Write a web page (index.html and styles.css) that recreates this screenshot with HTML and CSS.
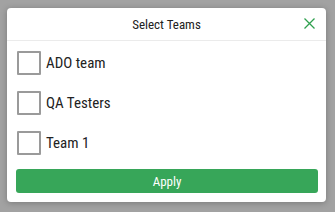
FILE: index.html
```html
<!DOCTYPE html>
<html>
<head>
<meta charset="utf-8">
<link rel="stylesheet" href="styles.css">
</head>
<body>
<div class="dialog">
  <div class="header">
    <span class="title">Select Teams</span>
    <span class="close"><svg width="11" height="11" viewBox="0 0 11 11"><path d="M0.5 0.5L10.5 10.5M10.5 0.5L0.5 10.5" stroke="#2fa04f" stroke-width="1.3" fill="none"/></svg></span>
  </div>
  <div class="list">
    <label class="row"><span class="box"></span><span class="label">ADO team</span></label>
    <label class="row"><span class="box"></span><span class="label">QA Testers</span></label>
    <label class="row"><span class="box"></span><span class="label">Team 1</span></label>
  </div>
  <div class="footer"><button class="apply">Apply</button></div>
</div>
</body>
</html>
```
FILE: styles.css
```css
html, body { margin: 0; padding: 0; }
body {
  width: 335px; height: 212px;
  background: #a2a2a2;
  font-family: "Roboto Condensed", Roboto, "Liberation Sans", sans-serif;
  font-stretch: condensed;
  padding: 8px 0 0 7px;
  box-sizing: border-box;
}
.dialog {
  width: 319px; height: 194px;
  background: #fff;
  border-radius: 4px;
  box-shadow: 0 1px 6px rgba(0,0,0,0.25);
  box-sizing: border-box;
  display: flex; flex-direction: column;
}
.header {
  position: relative;
  height: 33px;
  border-bottom: 1px solid #ebebeb;
  box-sizing: border-box;
  display: flex; align-items: center; justify-content: center;
}
.title { font-size: 13px; color: #222; padding-top: 1px; }
.close { position: absolute; right: 11px; top: 10px; width: 11px; height: 11px; display: flex; }
.list {
  padding: 10px 0 0 10px;
  display: flex; flex-direction: column; gap: 16px;
}
.row { display: flex; align-items: center; height: 24px; }
.box {
  width: 24px; height: 24px; box-sizing: border-box;
  border: 2px solid #9a9a9a; border-radius: 1px;
  margin-right: 5px;
}
.label { font-size: 15px; color: #222; }
.footer { padding: 14px 8px 0 9px; }
.apply {
  display: block; width: 302px; height: 24px;
  background: #37a659; color: #fff;
  border: none; border-radius: 3px;
  font-family: "Roboto Condensed", Roboto, "Liberation Sans", sans-serif;
  font-stretch: condensed;
  font-size: 13px; font-weight: 400;
  padding: 0;
}
```
